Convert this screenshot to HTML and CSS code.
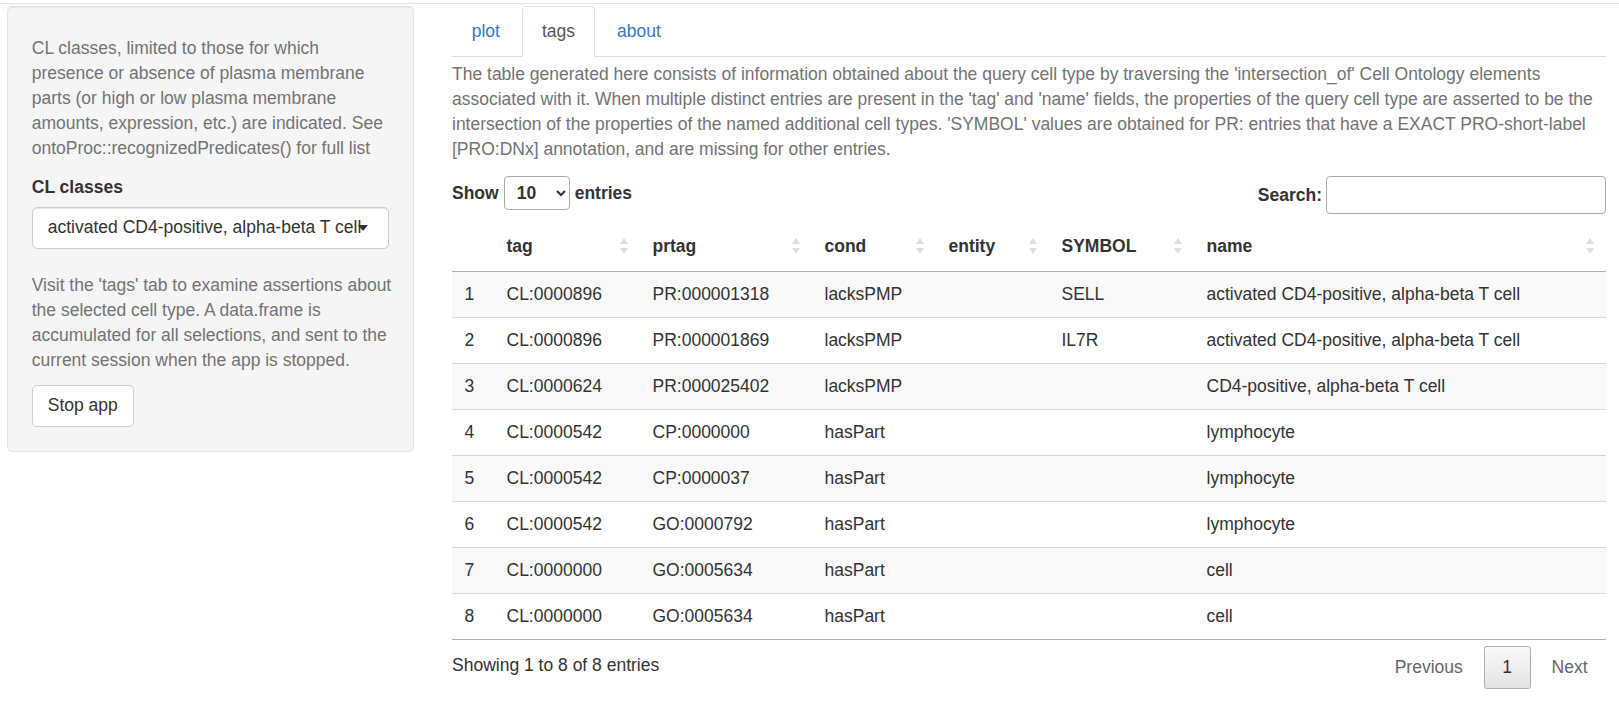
FILE: index.html
```html
<!DOCTYPE html>
<html lang="en">
<head>
<meta charset="utf-8">
<title>CL classes</title>
<link rel="stylesheet" href="styles.css">
</head>
<body>
<div class="topline"></div>
<div class="layout">
  <aside class="sidebar">
    <div class="well">
      <p class="help help-first">CL classes, limited to those for which<br>presence or absence of plasma membrane<br>parts (or high or low plasma membrane<br>amounts, expression, etc.) are indicated. See<br>ontoProc::recognizedPredicates() for full list</p>
      <div class="form-group">
        <label class="control-label">CL classes</label>
        <div class="selectize"><div class="item">activated CD4-positive, alpha-beta T cell</div></div>
      </div>
      <p class="help help-second">Visit the 'tags' tab to examine assertions about<br>the selected cell type. A data.frame is<br>accumulated for all selections, and sent to the<br>current session when the app is stopped.</p>
      <button class="btn" type="button">Stop app</button>
    </div>
  </aside>
  <main class="main">
    <ul class="tabs">
      <li><a href="#">plot</a></li>
      <li class="active"><a href="#">tags</a></li>
      <li><a href="#">about</a></li>
    </ul>
    <p class="desc">The table generated here consists of information obtained about the query cell type by traversing the 'intersection_of' Cell Ontology elements<br>associated with it. When multiple distinct entries are present in the 'tag' and 'name' fields, the properties of the query cell type are asserted to be the<br>intersection of the properties of the named additional cell types. 'SYMBOL' values are obtained for PR: entries that have a EXACT PRO-short-label<br>[PRO:DNx] annotation, and are missing for other entries.</p>
    <div class="dt-top">
      <label class="dt-length">Show <select class="len-select"><option>10</option><option>25</option><option>50</option><option>100</option></select> entries</label>
      <label class="dt-search">Search: <input type="search" class="search-input"></label>
    </div>
    <table class="dt">
      <colgroup>
        <col class="c-idx"><col class="c-tag"><col class="c-prtag"><col class="c-cond"><col class="c-entity"><col class="c-symbol"><col class="c-name">
      </colgroup>
      <thead>
        <tr>
          <th></th>
          <th>tag<span class="sort"></span></th>
          <th>prtag<span class="sort"></span></th>
          <th>cond<span class="sort"></span></th>
          <th>entity<span class="sort"></span></th>
          <th>SYMBOL<span class="sort"></span></th>
          <th>name<span class="sort"></span></th>
        </tr>
      </thead>
      <tbody>
        <tr class="odd"><td>1</td><td>CL:0000896</td><td>PR:000001318</td><td>lacksPMP</td><td></td><td>SELL</td><td>activated CD4-positive, alpha-beta T cell</td></tr>
        <tr><td>2</td><td>CL:0000896</td><td>PR:000001869</td><td>lacksPMP</td><td></td><td>IL7R</td><td>activated CD4-positive, alpha-beta T cell</td></tr>
        <tr class="odd"><td>3</td><td>CL:0000624</td><td>PR:000025402</td><td>lacksPMP</td><td></td><td></td><td>CD4-positive, alpha-beta T cell</td></tr>
        <tr><td>4</td><td>CL:0000542</td><td>CP:0000000</td><td>hasPart</td><td></td><td></td><td>lymphocyte</td></tr>
        <tr class="odd"><td>5</td><td>CL:0000542</td><td>CP:0000037</td><td>hasPart</td><td></td><td></td><td>lymphocyte</td></tr>
        <tr><td>6</td><td>CL:0000542</td><td>GO:0000792</td><td>hasPart</td><td></td><td></td><td>lymphocyte</td></tr>
        <tr class="odd"><td>7</td><td>CL:0000000</td><td>GO:0005634</td><td>hasPart</td><td></td><td></td><td>cell</td></tr>
        <tr><td>8</td><td>CL:0000000</td><td>GO:0005634</td><td>hasPart</td><td></td><td></td><td>cell</td></tr>
      </tbody>
    </table>
    <div class="dt-bottom">
      <div class="dt-info">Showing 1 to 8 of 8 entries</div>
      <div class="dt-paging">
        <a class="pg-btn disabled" href="#">Previous</a>
        <a class="pg-btn current" href="#">1</a>
        <a class="pg-btn disabled" href="#">Next</a>
      </div>
    </div>
  </main>
</div>
</body>
</html>
```

FILE: styles.css
```css
html, body {
  margin: 0;
  padding: 0;
  background: #fff;
}

body {
  font-family: "Liberation Sans", Arial, Helvetica, sans-serif;
  font-size: 17.5px;
  line-height: 25px;
  color: #333;
}

.topline {
  height: 3px;
  border-bottom: 1px solid #e3e3e3;
}

.layout {
  display: flex;
  align-items: flex-start;
  padding-top: 2px;
}

/* ---------- sidebar ---------- */
.sidebar {
  width: 407px;
  margin-left: 7px;
  flex: none;
}

.well {
  background: #f5f5f5;
  border: 1px solid #e3e3e3;
  border-radius: 5px;
  box-shadow: inset 0 1px 1px rgba(0, 0, 0, 0.05);
  padding: 23.75px;
}

.help {
  color: #737373;
  white-space: nowrap;
  margin: 5px 0 14.5px;
}

.help-second {
  margin: 5px 0 11.5px;
}

.form-group {
  margin-bottom: 24.75px;
}

.control-label {
  display: block;
  font-weight: bold;
  margin-bottom: 6.25px;
}

.selectize {
  position: relative;
  background: #fff;
  border: 1px solid #ccc;
  border-radius: 5px;
  box-shadow: inset 0 1px 1px rgba(0, 0, 0, 0.1);
  padding: 7.5px 15px;
}

.selectize .item {
  white-space: nowrap;
  color: #333;
}

.selectize::after {
  content: "";
  position: absolute;
  right: 20px;
  top: 50%;
  margin-top: -3px;
  width: 0;
  height: 0;
  border-style: solid;
  border-width: 6px 5px 0 5px;
  border-color: #333 transparent transparent transparent;
}

.btn {
  display: inline-block;
  font: inherit;
  line-height: 25px;
  color: #333;
  background: #fff;
  border: 1px solid #ccc;
  border-radius: 5px;
  padding: 7.5px 15px;
  margin: 0;
  cursor: pointer;
}

/* ---------- main ---------- */
.main {
  width: 1154px;
  margin-left: 38px;
  flex: none;
}

.tabs {
  display: flex;
  list-style: none;
  margin: 0;
  padding: 0;
  border-bottom: 1px solid #ddd;
}

.tabs li {
  margin-right: 2.5px;
  margin-bottom: -1px;
}

.tabs a {
  display: block;
  padding: 12px 18.75px;
  line-height: 25px;
  border: 1px solid transparent;
  border-radius: 5px 5px 0 0;
  color: #337ab7;
  text-decoration: none;
}

.tabs .active a {
  color: #555;
  background: #fff;
  border-color: #ddd #ddd transparent;
}

.desc {
  color: #737373;
  white-space: nowrap;
  margin: 5px 0 0;
}

.dt-top {
  display: flex;
  justify-content: space-between;
  align-items: flex-start;
  margin-top: 14px;
}

.dt-length,
.dt-search {
  display: flex;
  align-items: center;
  font-weight: bold;
  white-space: nowrap;
}

.dt-length {
  gap: 5px;
}

.len-select {
  font: inherit;
  font-weight: bold;
  color: #333;
  width: 66px;
  height: 34px;
  padding: 0 4px 0 8px;
  margin: 0;
  border: 1px solid #aaa;
  border-radius: 4px;
  background-color: #fff;
}

.search-input {
  font: inherit;
  width: 280px;
  height: 38px;
  box-sizing: border-box;
  margin: 0 0 0 4px;
  padding: 5px;
  border: 1px solid #aaa;
  border-radius: 4px;
  background: #fff;
}

.dt {
  width: 100%;
  table-layout: fixed;
  border-collapse: separate;
  border-spacing: 0;
  margin-top: 6.5px;
  border-bottom: 1px solid rgba(0, 0, 0, 0.3);
}

.c-idx { width: 42px; }
.c-tag { width: 146px; }
.c-prtag { width: 172px; }
.c-cond { width: 124px; }
.c-entity { width: 113px; }
.c-symbol { width: 145px; }
.c-name { width: auto; }

.dt th {
  position: relative;
  text-align: left;
  font-weight: bold;
  padding: 13px 12.5px 12.5px;
  border-bottom: 1px solid rgba(0, 0, 0, 0.3);
  white-space: nowrap;
}

.dt td {
  padding: 10px 12.5px;
  border-top: 1px solid rgba(0, 0, 0, 0.15);
  white-space: nowrap;
}

.dt tbody tr:first-child td {
  border-top: none;
}

.dt tr.odd td {
  background: #f9f9f9;
}

.sort {
  position: absolute;
  right: 12px;
  top: 50%;
  margin-top: -8px;
  width: 8px;
  height: 16px;
}

.sort::before,
.sort::after {
  content: "";
  position: absolute;
  left: 0;
  width: 0;
  height: 0;
  border-style: solid;
}

.sort::before {
  top: 0;
  border-width: 0 4px 6px 4px;
  border-color: transparent transparent #dcdcdc transparent;
}

.sort::after {
  bottom: 0;
  border-width: 6px 4px 0 4px;
  border-color: #dcdcdc transparent transparent transparent;
}

.dt-bottom {
  display: flex;
  justify-content: space-between;
  align-items: flex-start;
}

.dt-info {
  padding-top: 13px;
}

.dt-paging {
  display: flex;
  padding-top: 6px;
}

.pg-btn {
  display: block;
  padding: 8px 17.5px;
  line-height: 25px;
  margin-left: 2.5px;
  border: 1px solid transparent;
  border-radius: 2.5px;
  color: #666;
  text-decoration: none;
}

.pg-btn.current {
  color: #333;
  border-color: #adadad;
  background: linear-gradient(to bottom, #f8f8f8 0%, #e4e4e4 100%);
}
```
